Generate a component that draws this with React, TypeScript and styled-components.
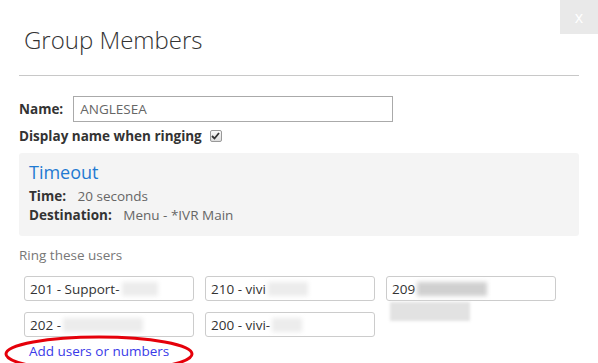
import React from "react";
import styled, { createGlobalStyle } from "styled-components";

const Global = createGlobalStyle`
  html, body { margin: 0; padding: 0; background: #fff; }
  body { font-family: "Open Sans", "DejaVu Sans", sans-serif; font-size: 13.5px; color: #333; }
  * { box-sizing: border-box; }
`;

const Modal = styled.div`
  position: relative;
  width: 598px;
  height: 363px;
  overflow: hidden;
  background: #fff;
`;

const Close = styled.div`
  position: absolute;
  top: 0;
  right: 0;
  width: 38px;
  height: 34px;
  background: #e9e9e9;
  color: #fff;
  font-size: 16px;
  display: flex;
  align-items: center;
  justify-content: center;
`;

const Header = styled.div`
  margin: 0 19px;
  padding: 24px 0 0 5px;
  height: 76px;
  border-bottom: 1px solid #c8c8c8;
`;

const Title = styled.h1`
  margin: 0;
  font-size: 24px;
  font-weight: 300;
  color: #333;
  line-height: 32px;
`;

const Body = styled.div`
  padding: 20px 19px 0 19px;
`;

const Row = styled.div`
  display: flex;
  align-items: center;
  gap: 10px;
  height: 26px;
`;

const Label = styled.span`
  font-weight: 700;
  color: #333;
`;

const TextInput = styled.div`
  width: 320px;
  height: 26px;
  border: 1px solid #aaa;
  padding: 0 6px;
  display: flex;
  align-items: center;
  color: #666;
`;

const CheckRow = styled.div`
  display: flex;
  align-items: center;
  gap: 8px;
  height: 28px;
`;

const Check = styled.span`
  width: 12px;
  height: 12px;
  border: 1px solid #999;
  border-radius: 2px;
  background: linear-gradient(#fafafa, #ddd);
  display: flex;
  align-items: center;
  justify-content: center;
`;

const Panel = styled.div`
  margin-top: 3px;
  background: #f4f4f4;
  border-radius: 3px;
  height: 83px;
  padding: 4px 10px;
`;

const PanelTitle = styled.div`
  font-size: 18px;
  color: #1f7ad2;
  line-height: 30px;
`;

const InfoLine = styled.div`
  line-height: 19px;
  color: #666;
  b { color: #333; margin-right: 8px; }
`;

const Section = styled.div`
  margin-top: 9px;
  color: #777;
  line-height: 20px;
`;

const Grid = styled.div`
  margin-top: 11px;
  padding-left: 5px;
  display: grid;
  grid-template-columns: repeat(3, 170px);
  gap: 11px 11px;
`;

const Cell = styled.div`
  position: relative;
`;

const UserBox = styled.div`
  height: 25px;
  border: 1px solid #ccc;
  border-radius: 3px;
  padding: 0 5px;
  display: flex;
  align-items: center;
  color: #333;
  white-space: nowrap;
`;

const Blur = styled.span<{ $w: number; $dark?: boolean }>`
  display: inline-block;
  width: ${(p) => p.$w}px;
  height: 14px;
  margin-left: 2px;
  background: ${(p) => (p.$dark ? "#d0d0d0" : "#ececec")};
  filter: blur(2px);
`;

const BlurBelow = styled.div`
  position: absolute;
  left: 4px;
  top: 26px;
  width: 80px;
  height: 19px;
  background: #e2e2e2;
  filter: blur(1.5px);
`;

const LinkArea = styled.div`
  position: relative;
  padding: 5px 0 0 10px;
`;

const AddLink = styled.a`
  color: #3a3ae8;
  text-decoration: none;
`;

const Ellipse = styled.svg`
  position: absolute;
  left: -19px;
  top: -10px;
  overflow: visible;
`;

export default function App() {
  return (
    <>
      <Global />
      <Modal>
        <Close>x</Close>
        <Header>
          <Title>Group Members</Title>
        </Header>
        <Body>
          <Row>
            <Label>Name:</Label>
            <TextInput>ANGLESEA</TextInput>
          </Row>
          <CheckRow>
            <Label>Display name when ringing</Label>
            <Check>
              <svg width="9" height="8" viewBox="0 0 9 8">
                <path d="M1 4 L3.5 6.5 L8 1" stroke="#333" strokeWidth="1.8" fill="none" />
              </svg>
            </Check>
          </CheckRow>
          <Panel>
            <PanelTitle>Timeout</PanelTitle>
            <InfoLine>
              <b>Time:</b> 20 seconds
            </InfoLine>
            <InfoLine>
              <b>Destination:</b> Menu - *IVR Main
            </InfoLine>
          </Panel>
          <Section>Ring these users</Section>
          <Grid>
            <Cell>
              <UserBox>
                201 - Support-<Blur $w={36} />
              </UserBox>
            </Cell>
            <Cell>
              <UserBox>
                210 - vivi <Blur $w={40} />
              </UserBox>
            </Cell>
            <Cell>
              <UserBox>
                209 <Blur $w={70} $dark />
              </UserBox>
              <BlurBelow />
            </Cell>
            <Cell>
              <UserBox>
                202 - <Blur $w={80} />
              </UserBox>
            </Cell>
            <Cell>
              <UserBox>
                200 - vivi-<Blur $w={30} />
              </UserBox>
            </Cell>
          </Grid>
          <LinkArea>
            <AddLink href="#">Add users or numbers</AddLink>
            <Ellipse width="200" height="40">
              <ellipse cx="99" cy="27" rx="93" ry="17" fill="none" stroke="#e5000a" strokeWidth="3" />
            </Ellipse>
          </LinkArea>
        </Body>
      </Modal>
    </>
  );
}
